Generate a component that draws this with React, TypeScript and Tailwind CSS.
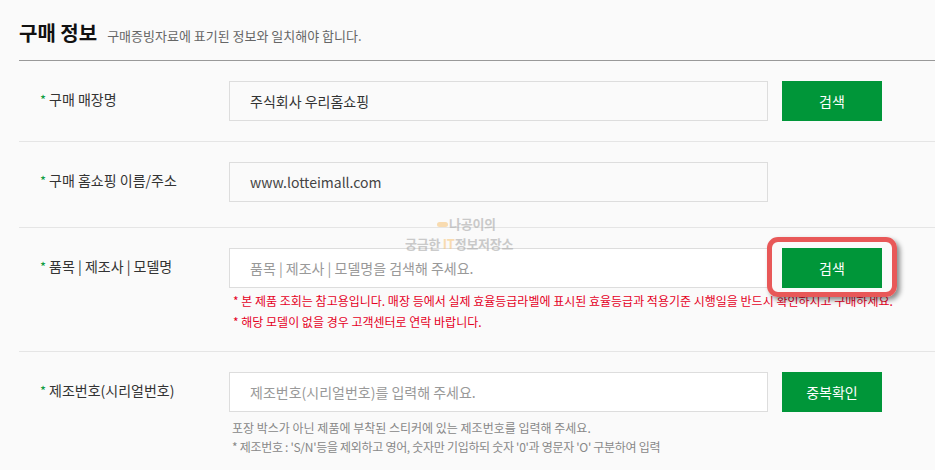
import React from "react";

const Label = ({ text }: { text: string }) => (
  <div className="w-[210px] shrink-0 pl-[21px] h-[37px] flex items-center text-[14px] text-[#333]">
    <span className="text-[#0a9a3e] text-[13px] mr-[3px]">*</span>
    {text}
  </div>
);

const Btn = ({ text }: { text: string }) => (
  <button className="ml-[14px] w-[100px] h-[40px] bg-[#009639] text-white text-[14px] flex items-center justify-center">
    {text}
  </button>
);

export default function App() {
  return (
    <div className="relative min-h-screen bg-[#fafafa] pl-[19px] overflow-hidden font-['Noto_Sans_CJK_KR','Noto_Sans',sans-serif]">
      {/* header */}
      <div className="h-[61px] border-b border-[#999] pt-[20px] flex items-baseline">
        <span className="text-[20px] leading-[26px] font-bold text-[#111]">구매 정보</span>
        <span className="ml-[10px] text-[13px] text-[#666] leading-[26px]">
          구매증빙자료에 표기된 정보와 일치해야 합니다.
        </span>
      </div>

      {/* row 1 */}
      <div className="flex pt-[20px] pb-[20px] border-b border-[#e5e5e5]">
        <Label text="구매 매장명" />
        <div className="w-[539px] h-[40px] border border-[#ddd] bg-[#fafafa] pl-[20px] flex items-center text-[14px] text-[#333]">
          주식회사 우리홈쇼핑
        </div>
        <Btn text="검색" />
      </div>

      {/* row 2 */}
      <div className="flex pt-[20px] pb-[25px] border-b border-[#e5e5e5]">
        <Label text="구매 홈쇼핑 이름/주소" />
        <div className="w-[539px] h-[40px] border border-[#ddd] bg-[#fafafa] pl-[20px] flex items-center text-[14px] text-[#444]">
          www.lotteimall.com
        </div>
      </div>

      {/* row 3 */}
      <div className="flex pt-[20px] pb-[19px] border-b border-[#e5e5e5]">
        <Label text="품목 | 제조사 | 모델명" />
        <div className="flex flex-col">
          <div className="flex">
            <div className="w-[539px] h-[40px] border border-[#ddd] bg-white pl-[20px] flex items-center text-[14px] text-[#999]">
              품목 | 제조사 | 모델명을 검색해 주세요.
            </div>
            <div className="relative">
              <Btn text="검색" />
              <div className="absolute left-[-1px] top-[-11px] w-[130px] h-[60px] rounded-[11px] border-[5px] border-[#e85858] shadow-[3px_3px_5px_rgba(0,0,0,0.45)]" />
            </div>
          </div>
          <div className="mt-[2px] pl-[4px] text-[12px] leading-[21px] text-[#e5001f] whitespace-nowrap">
            <div>* 본 제품 조회는 참고용입니다. 매장 등에서 실제 효율등급라벨에 표시된 효율등급과 적용기준 시행일을 반드시 확인하시고 구매하세요.</div>
            <div>* 해당 모델이 없을 경우 고객센터로 연락 바랍니다.</div>
          </div>
        </div>
      </div>

      {/* row 4 */}
      <div className="flex pt-[20px] pb-[20px]">
        <Label text="제조번호(시리얼번호)" />
        <div className="flex flex-col">
          <div className="flex">
            <div className="w-[539px] h-[40px] border border-[#ddd] bg-white pl-[20px] flex items-center text-[14px] text-[#999]">
              제조번호(시리얼번호)를 입력해 주세요.
            </div>
            <Btn text="중복확인" />
          </div>
          <div className="mt-[6px] pl-[3px] text-[12px] leading-[19px] text-[#888] whitespace-nowrap">
            <div>포장 박스가 아닌 제품에 부착된 스티커에 있는 제조번호를 입력해 주세요.</div>
            <div className="tracking-[-0.025em]">* 제조번호 : 'S/N'등을 제외하고 영어, 숫자만 기입하되 숫자 '0'과 영문자 'O' 구분하여 입력</div>
          </div>
        </div>
      </div>

      {/* watermark */}
      <div className="absolute left-[405px] top-[214px] opacity-60 pointer-events-none text-[13px] font-bold leading-[20px] text-[#aaa] tracking-[-0.02em]">
        <div className="flex items-center pl-[32px]">
          <span className="inline-block w-[11px] h-[5px] rounded-full bg-[#f8c880] mr-[1px]" />
          나공이의
        </div>
        <div>
          궁금한 <span className="text-[#f8c880]">IT</span>정보저장소
        </div>
      </div>
    </div>
  );
}
